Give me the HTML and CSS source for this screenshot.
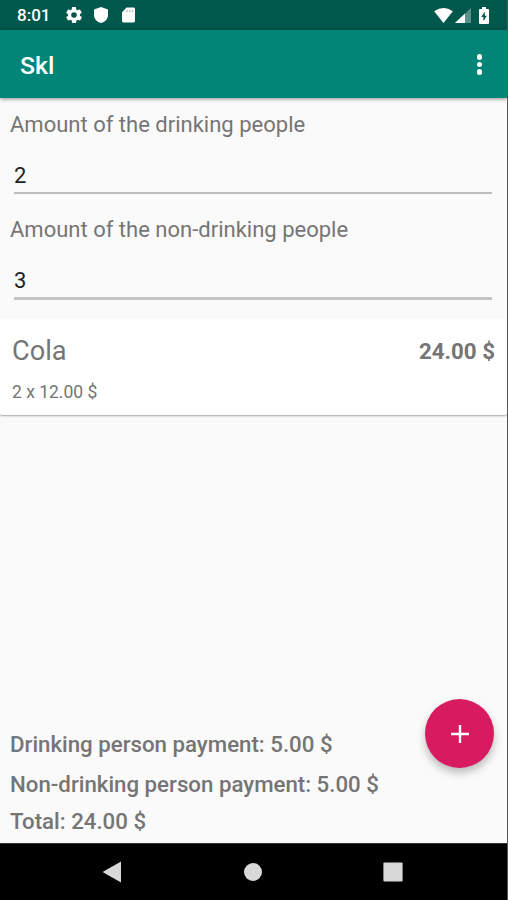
FILE: index.html
```html
<!DOCTYPE html>
<html lang="en">
<head>
    <meta charset="UTF-8">
    <meta name="viewport" content="width=device-width, initial-scale=1.0">
    <title>Skl</title>
    <link rel="stylesheet" href="styles.css">
</head>
<body>
    <div class="screen">
        <div class="status-bar">
            <span class="clock">8:01</span>
            <svg class="icon-gear" viewBox="2 2 20 20"><path d="M19.4 13c0-.3.1-.6.1-1s0-.7-.1-1l2.1-1.6c.2-.2.2-.4.1-.6l-2-3.5c-.1-.2-.4-.3-.6-.2l-2.5 1c-.5-.4-1.1-.7-1.7-1l-.4-2.6c0-.3-.2-.5-.5-.5h-4c-.3 0-.4.2-.5.4L9.2 5.1c-.6.2-1.2.6-1.7 1l-2.5-1c-.2-.1-.5 0-.6.2l-2 3.500c-.1.2-.1.4.1.6L4.600 11c0 .3-.1.7-.1 1s0 .7.1 1l-2.1 1.600c-.2.2-.2.4-.1.6l2 3.500c.1.2.4.3.6.2l2.500-1c.5.4 1.100.7 1.700 1l.4 2.600c0 .3.2.5.5.5h4c.3 0 .4-.2.5-.4l.4-2.700c.6-.2 1.200-.6 1.700-1l2.500 1c.2.1.5 0 .6-.2l2-3.500c.1-.2.1-.4-.1-.6zM12 15.500a3.500 3.500 0 1 1 0-7 3.500 3.500 0 0 1 0 7z"/></svg>
            <svg class="icon-shield" viewBox="0 0 14 16"><path d="M7 0L14 2.500V8c0 4-3 7-7 8-4-1-7-4-7-8V2.500z"/></svg>
            <svg class="icon-sd" viewBox="0 0 14 16"><path d="M5 0H12.500Q14 0 14 1.500V14.500Q14 16 12.500 16H1.500Q0 16 0 14.500V5z"/><path class="sd-pins" d="M5.500 2.500V5M8.300 2.500V5M11.100 2.500V5"/></svg>
            <div class="status-right">
                <svg class="icon-wifi" viewBox="0 0 20 16"><path d="M0 3.500Q10-3.500 20 3.500L10 16z"/></svg>
                <svg class="icon-signal" viewBox="0 0 16 15"><path opacity=".35" d="M16 0V15H0z"/><path d="M10 5.600V15H0z"/></svg>
                <svg class="icon-battery" viewBox="0 0 10 17"><path fill-rule="evenodd" d="M3 0H7V2H9Q10 2 10 3V16Q10 17 9 17H1Q0 17 0 16V3Q0 2 1 2H3zM5.800 4.500L2.200 10H4.400V14.200L7.800 8.700H5.800z"/></svg>
            </div>
        </div>

        <div class="toolbar">
            <h1>Skl</h1>
            <div class="overflow-menu">
                <span></span>
                <span></span>
                <span></span>
            </div>
        </div>

        <div class="content">
            <div class="form">
                <label for="drinking">Amount of the drinking people</label>
                <input type="text" id="drinking" class="field" value="2">
                <label for="nonDrinking">Amount of the non-drinking people</label>
                <input type="text" id="nonDrinking" class="field field-second" value="3">
            </div>

            <div class="item-card">
                <div class="item-info">
                    <div class="item-name">Cola</div>
                    <div class="item-count">2 x 12.00 $</div>
                </div>
                <div class="item-price">24.00 $</div>
            </div>

            <div class="summary">
                <p>Drinking person payment: 5.00 $</p>
                <p>Non-drinking person payment: 5.00 $</p>
                <p>Total: 24.00 $</p>
            </div>

            <button class="add-button" aria-label="Add">
                <svg viewBox="0 0 18 18"><path d="M9 0V18M0 9H18"/></svg>
            </button>
        </div>

        <div class="nav-bar">
            <svg viewBox="0 0 20 22"><path d="M18 .5V21.500L-.5 11z"/></svg>
            <svg viewBox="0 0 20 22"><circle cx="10" cy="11" r="9"/></svg>
            <svg viewBox="0 0 20 22"><rect x=".4" y="1.400" width="19.200" height="19.200" rx="1"/></svg>
        </div>
    </div>
</body>
</html>
```
FILE: styles.css
```css
* {
    margin: 0;
    padding: 0;
    box-sizing: border-box;
}

body {
    font-family: Roboto, sans-serif;
    background: #fafafa;
    color: #757575;
}

.screen {
    width: 508px;
    height: 900px;
    display: flex;
    flex-direction: column;
    overflow: hidden;
    border-right: 1px solid #555;
}

.status-bar {
    height: 30px;
    background: #00574b;
    color: white;
    display: flex;
    align-items: center;
    padding: 0 18px 0 17px;
}

.status-bar svg {
    fill: white;
}

.clock {
    width: 49px;
    font-size: 17px;
    font-weight: 500;
}

.icon-gear {
    width: 16px;
    height: 16px;
}

.icon-shield {
    width: 14px;
    height: 16px;
    margin-left: 12px;
}

.icon-sd {
    width: 13px;
    height: 16px;
    margin-left: 14px;
}

.sd-pins {
    stroke: #00574b;
    stroke-opacity: 0.4;
    stroke-width: 1.2;
}

.status-right {
    display: flex;
    align-items: center;
    margin-left: auto;
}

.icon-wifi {
    width: 19px;
    height: 15px;
}

.icon-signal {
    width: 16px;
    height: 15px;
    margin-left: 2px;
}

.icon-battery {
    width: 10px;
    height: 17px;
    margin-left: 8px;
}

.toolbar {
    height: 68px;
    background: #008577;
    color: white;
    display: flex;
    align-items: center;
    justify-content: space-between;
    padding: 2px 25px 0 20px;
    box-shadow: 0 1px 4px rgba(0,0,0,0.45);
    z-index: 1;
}

.toolbar h1 {
    font-size: 24.8px;
    font-weight: 500;
}

.overflow-menu {
    display: flex;
    flex-direction: column;
    gap: 2px;
    margin-top: -1px;
}

.overflow-menu span {
    width: 5.5px;
    height: 5.5px;
    border-radius: 50%;
    background: white;
}

.content {
    flex: 1;
    position: relative;
    display: flex;
    flex-direction: column;
    background: #fafafa;
}

.form {
    display: flex;
    flex-direction: column;
    padding: 12px 10px 0;
}

.form label {
    font-size: 22.03px;
    line-height: 30px;
}

.field {
    height: 38px;
    margin: 16px 5px 21px 4px;
    padding-top: 2px;
    border: none;
    border-bottom: 2px solid #bdbdbd;
    background: transparent;
    outline: none;
    font-family: inherit;
    font-size: 22px;
    color: #212121;
}

.field-second {
    margin-bottom: 18px;
    height: 39px;
    border-bottom-width: 3px;
    border-bottom-color: #c4c4c4;
}

.item-card {
    height: 97px;
    display: flex;
    justify-content: space-between;
    align-items: flex-start;
    padding: 15px 12px 0;
    background: white;
    border-radius: 2px;
    box-shadow: 0 1px 2px rgba(0,0,0,0.35);
}

.item-name {
    font-size: 27.2px;
    line-height: 36px;
}

.item-count {
    font-size: 17.5px;
    line-height: 24px;
    margin-top: 11px;
}

.item-price {
    font-size: 22.3px;
    font-weight: 700;
    line-height: 36px;
}

.summary {
    margin-top: auto;
    padding: 0 10px 4px;
    font-size: 22.25px;
    font-weight: 500;
    line-height: 36px;
}

.summary p:first-child {
    margin-bottom: 4px;
}

.summary p:nth-child(2) {
    margin-bottom: 1px;
}

/* Floating button sits above the list and the totals */
.add-button {
    position: absolute;
    right: 13px;
    bottom: 75px;
    width: 69px;
    height: 69px;
    border: none;
    border-radius: 50%;
    background: #d81b60;
    box-shadow: 0 5px 9px rgba(0,0,0,0.25);
    display: flex;
    align-items: center;
    justify-content: center;
}

.add-button svg {
    width: 18px;
    height: 18px;
    stroke: white;
    stroke-width: 2.4;
}

.nav-bar {
    height: 57px;
    background: black;
    display: flex;
    align-items: center;
    justify-content: center;
    gap: 120px;
    padding-right: 1px;
    border-top: 1px solid #333;
}

.nav-bar svg {
    width: 20px;
    height: 22px;
    fill: #d8d8d8;
}
```
